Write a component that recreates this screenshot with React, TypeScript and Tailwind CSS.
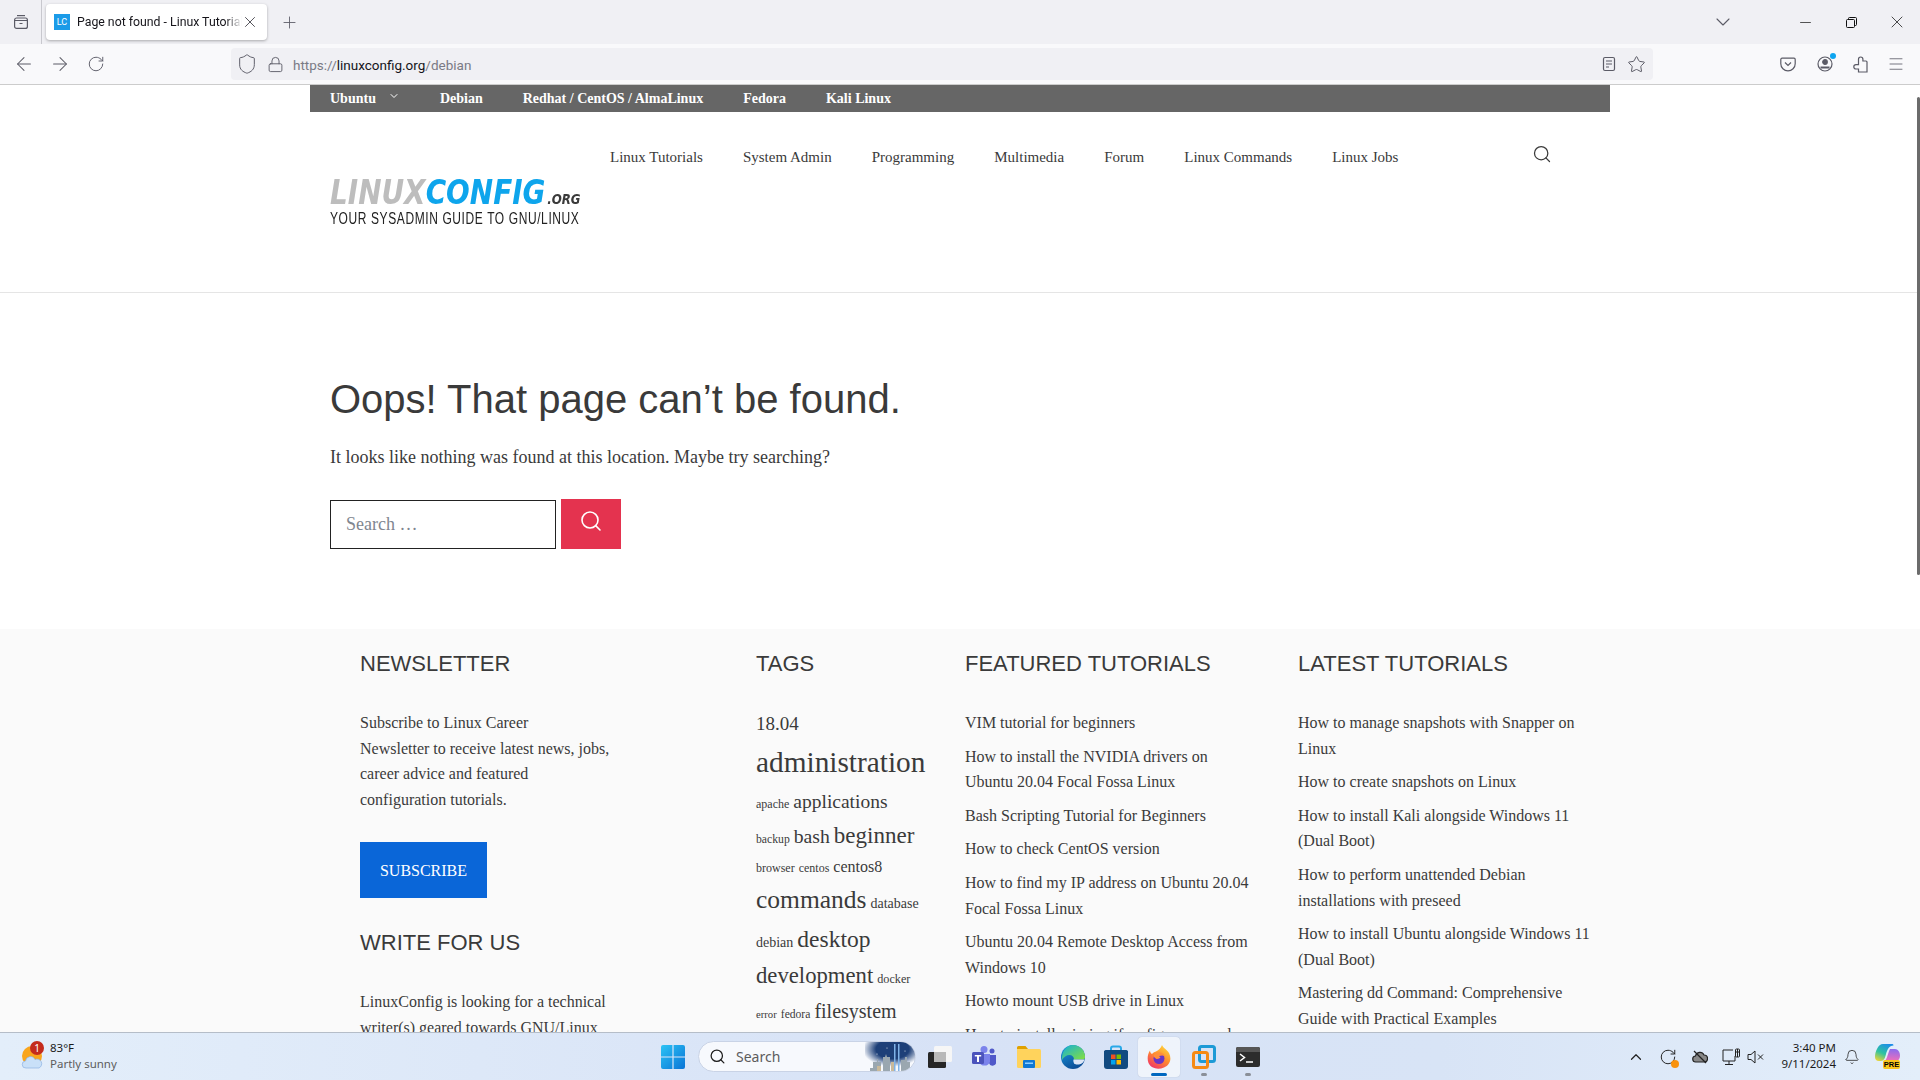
import React from "react";
import { ArrowLeft, ArrowRight, RotateCw, Shield, Lock, Star, Plus, X, ChevronDown, Minus, Menu, Search, ChevronUp, Bell } from "lucide-react";

const serif = "font-['Liberation_Serif',serif]";

function FirefoxView() {
  return (
    <svg width="16" height="16" viewBox="0 0 16 16" fill="none" stroke="#5b5b66" strokeWidth="1.2">
      <path d="M4 1.6h8" />
      <rect x="1.6" y="4" width="12.8" height="10.4" rx="2" />
      <path d="M1.6 6.5h12.8M6.5 9.5h3" />
    </svg>
  );
}

function Chrome() {
  return (
    <div className="shrink-0 font-['Roboto',sans-serif]">
      <div className="h-[44px] bg-[#f0f0f4] flex items-center relative">
        <div className="w-[42px] h-[44px] border-r border-[#c8c8ce] flex items-center justify-center">
          <FirefoxView />
        </div>
        <div className="ml-[4px] w-[221px] h-[36px] bg-white rounded-[4px] shadow-[0_1px_3px_rgba(0,0,0,0.3)] flex items-center pl-[8px]">
          <span className="w-[16px] h-[16px] bg-[#1b9be8] text-white text-[9px] flex items-center justify-center leading-none shrink-0">LC</span>
          <span className="ml-[7px] w-[165px] text-[12.3px] text-[#15141a] whitespace-nowrap overflow-hidden [mask-image:linear-gradient(to_right,black_90%,transparent)]">Page not found - Linux Tutorials</span>
          <X size={18} strokeWidth={1.1} color="#33323a" className="-ml-[1px]" />
        </div>
        <Plus size={19} strokeWidth={1.1} color="#5b5b66" className="ml-[13px]" />
        <div className="ml-auto flex items-center">
          <ChevronDown size={24} strokeWidth={1.1} color="#5b5b66" className="mr-[62px]" />
          <Minus size={17} strokeWidth={1} color="#111" className="mr-[32px]" />
          <svg width="11" height="11" viewBox="0 0 11 11" fill="none" stroke="#111" strokeWidth="1" className="mr-[30px]"><rect x="0.5" y="2.5" width="8" height="8" rx="1" /><path d="M2.5 2.5V1.5a1 1 0 011-1h6a1 1 0 011 1v6a1 1 0 01-1 1h-1" /></svg>
          <X size={20} strokeWidth={0.9} color="#111" className="mr-[13px]" />
        </div>
      </div>
      <div className="h-[41px] bg-[#f9f9fb] border-b border-[#cccccc] flex items-center">
        <ArrowLeft size={22} strokeWidth={1.1} color="#5b5b66" className="ml-[13px]" />
        <ArrowRight size={22} strokeWidth={1.1} color="#5b5b66" className="ml-[14px]" />
        <RotateCw size={18} strokeWidth={1.25} color="#5b5b66" className="ml-[16px]" />
        <div className="ml-[126px] w-[1422px] h-[32px] rounded-[4px] bg-[#f0f0f4] flex items-center pl-[5px]">
          <Shield size={22} strokeWidth={1.05} color="#5b5b66" />
          <Lock size={17} strokeWidth={1.3} color="#5b5b66" className="ml-[9px]" />
          <span className="ml-[9px] mt-[2px] text-[13.5px] text-[#7a7a85]">https://<span className="text-[#15141a]">linuxconfig.org</span>/debian</span>
          <div className="ml-auto flex items-center">
            <svg width="14" height="16" viewBox="0 0 14 16" fill="none" stroke="#5b5b66" strokeWidth="1.2"><rect x="1.5" y="1.5" width="11" height="13" rx="1.5" /><path d="M4 5h6M4 8h6M4 11h3" /></svg>
            <Star size={19} strokeWidth={1.25} color="#5b5b66" className="ml-[11px] mr-[7px]" />
          </div>
        </div>
        <div className="ml-auto flex items-center">
          <svg width="16" height="15" viewBox="0 0 16 15" fill="none" stroke="#5b5b66" strokeWidth="1.2" className="mr-[21px]"><path d="M2 1.2h12a1.2 1.2 0 011.2 1.2v4.3a7.2 7.2 0 01-14.4 0V2.4A1.2 1.2 0 012 1.2z" /><path d="M5 5.5l3 3 3-3" /></svg>
          <div className="relative mr-[20px]">
            <svg width="16" height="16" viewBox="0 0 16 16" fill="none" stroke="#5b5b66" strokeWidth="1.2"><circle cx="8" cy="8" r="7" /><circle cx="8" cy="6" r="2.3" fill="#5b5b66" /><path d="M3.5 11.5h9" strokeWidth="2" /></svg>
            <span className="absolute -top-[3px] -right-[3px] w-[6px] h-[6px] rounded-full bg-[#0ea5f0]" />
          </div>
          <svg width="15" height="17" viewBox="0 0 15 17" fill="none" stroke="#5b5b66" strokeWidth="1.2" className="mr-[19px]"><path d="M5.5 5V3.200a2.200 2.200 0 014.400 0V5H13a1 1 0 011 1v10H5.500v-3H3a2.200 2.200 0 010-4.400h2.500z" /></svg>
          <Menu size={18} strokeWidth={1.1} color="#5b5b66" className="mr-[15px]" />
        </div>
      </div>
    </div>
  );
}

function Logo() {
  return (
    <div className="w-[250px] select-none">
      <div className="w-[300px] h-[27px] flex items-baseline font-['DejaVu_Sans',sans-serif] font-bold italic text-[33px] leading-[27px] whitespace-nowrap origin-left scale-x-[0.845]">
        <span className="text-[#bdbdbd]">LINUX</span>
        <span className="text-[#0ea5ec]">CONFIG</span>
        <span className="text-[#3a3a3a] text-[14px] ml-[2px]">.ORG</span>
      </div>
      <div className="mt-[7px] text-[12px] leading-[12px] whitespace-nowrap text-[#222] font-['Liberation_Sans',sans-serif] scale-y-[1.3] tracking-[0.6px]">YOUR SYSADMIN GUIDE TO GNU/LINUX</div>
    </div>
  );
}

function TopBars() {
  return (
    <>
      <div className={`w-[1300px] mx-auto h-[27px] bg-[#666666] flex items-center pl-[20px] gap-[40px] text-white font-bold text-[14px] ${serif}`}>
        <span className="flex items-center">Ubuntu<ChevronDown size={12} strokeWidth={2} className="ml-[12px] -mt-[5px]" /></span>
        <span>Debian</span>
        <span>Redhat / CentOS / AlmaLinux</span>
        <span>Fedora</span>
        <span>Kali Linux</span>
      </div>
      <div className="border-b border-[#e5e5e5] h-[181px]">
        <div className="w-[1300px] mx-auto flex pl-[20px] relative">
          <div className="pt-[67px] w-[280px]"><Logo /></div>
          <div className={`pt-[35px] flex gap-[40px] text-[15px] leading-[20px] text-[#3a3a3a] ${serif}`}>
            <span>Linux Tutorials</span>
            <span>System Admin</span>
            <span>Programming</span>
            <span>Multimedia</span>
            <span>Forum</span>
            <span>Linux Commands</span>
            <span>Linux Jobs</span>
          </div>
          <Search size={20} strokeWidth={1.5} color="#3a3a3a" className="absolute left-[1222px] top-[32px]" />
        </div>
      </div>
    </>
  );
}

function NotFound() {
  return (
    <div className="h-[336px] w-[1300px] mx-auto px-[20px] pt-[82px]">
      <h1 className="font-['Liberation_Sans',sans-serif] text-[40px] leading-[48px] text-[#3a3a3a]">Oops! That page can’t be found.</h1>
      <p className={`mt-[21px] text-[18px] leading-[27px] text-[#3a3a3a] ${serif}`}>It looks like nothing was found at this location. Maybe try searching?</p>
      <div className="mt-[28px] flex items-start">
        <div className={`w-[226px] h-[49px] mt-[1px] border-[1.5px] border-[#222] flex items-center pl-[15px] text-[18px] text-[#808690] ${serif}`}>Search …</div>
        <div className="ml-[5px] w-[60px] h-[50px] bg-[#e4334f] flex items-center justify-center">
          <Search size={24} strokeWidth={1.6} color="white" className="-mt-[6px]" />
        </div>
      </div>
    </div>
  );
}

function Heading({ children }: { children: React.ReactNode }) {
  return <h2 className="font-['Liberation_Sans',sans-serif] text-[22px] leading-[28px] text-[#3a3a3a]">{children}</h2>;
}

function Links({ items }: { items: React.ReactNode[] }) {
  return (
    <ul className="mt-[32px] flex flex-col gap-[8px]">
      {items.map((t, i) => <li key={i}>{t}</li>)}
    </ul>
  );
}

function Tags() {
  return (
    <div className="mt-[31px] whitespace-nowrap leading-[1.6]">
      <span className="text-[19px]">18.04</span><br />
      <span className="text-[29.33px]">administration</span><br />
      <span className="text-[12px]">apache</span> <span className="text-[19.5px]">applications</span><br />
      <span className="text-[11.7px]">backup</span> <span className="text-[19.7px]">bash</span> <span className="text-[23px]">beginner</span><br />
      <span className="text-[12px]">browser</span> <span className="text-[12px]">centos</span> <span className="text-[16px]">centos8</span><br />
      <span className="text-[25.5px]">commands</span> <span className="text-[14px]">database</span><br />
      <span className="text-[14px]">debian</span> <span className="text-[23.5px]">desktop</span><br />
      <span className="text-[22.7px]">development</span> <span className="text-[12.2px]">docker</span><br />
      <span className="text-[10.7px]">error</span> <span className="text-[11.6px]">fedora</span> <span className="text-[20px]">filesystem</span>
    </div>
  );
}

function Footer() {
  return (
    <div className={`bg-[#fafafa] h-[500px] text-[16px] leading-[1.6] text-[#3a3a3a] ${serif}`}>
      <div className="w-[1300px] mx-auto pl-[50px] pt-[21px] grid grid-cols-[396px_209px_333px_292px]">
        <div>
          <Heading>NEWSLETTER</Heading>
          <p className="mt-[32px]">Subscribe to Linux Career<br />Newsletter to receive latest news, jobs,<br />career advice and featured<br />configuration tutorials.</p>
          <div className="mt-[30px] w-[127px] h-[56px] bg-[#0a66d8] text-white text-[16px] flex items-center justify-center">SUBSCRIBE</div>
          <div className="mt-[31px]"><Heading>WRITE FOR US</Heading></div>
          <p className="mt-[32px]">LinuxConfig is looking for a technical<br />writer(s) geared towards GNU/Linux<br />and FLOSS technologies.</p>
        </div>
        <div>
          <Heading>TAGS</Heading>
          <Tags />
        </div>
        <div>
          <Heading>FEATURED TUTORIALS</Heading>
          <Links items={[
            "VIM tutorial for beginners",
            <>How to install the NVIDIA drivers on<br />Ubuntu 20.04 Focal Fossa Linux</>,
            "Bash Scripting Tutorial for Beginners",
            "How to check CentOS version",
            <>How to find my IP address on Ubuntu 20.04<br />Focal Fossa Linux</>,
            <>Ubuntu 20.04 Remote Desktop Access from<br />Windows 10</>,
            "Howto mount USB drive in Linux",
            "How to install missing ifconfig command",
          ]} />
        </div>
        <div>
          <Heading>LATEST TUTORIALS</Heading>
          <Links items={[
            <>How to manage snapshots with Snapper on<br />Linux</>,
            "How to create snapshots on Linux",
            <>How to install Kali alongside Windows 11<br />(Dual Boot)</>,
            <>How to perform unattended Debian<br />installations with preseed</>,
            <>How to install Ubuntu alongside Windows 11<br />(Dual Boot)</>,
            <>Mastering dd Command: Comprehensive<br />Guide with Practical Examples</>,
          ]} />
        </div>
      </div>
    </div>
  );
}

function Slot({ w, children, active, running }: { w: number; children: React.ReactNode; active?: boolean; running?: boolean }) {
  return (
    <div style={{ width: w }} className={`relative h-[40px] flex items-center justify-center rounded-[4px] ${active ? "bg-white/60 shadow-[0_0_1px_rgba(0,0,0,0.25)]" : ""}`}>
      {children}
      {active && <span className="absolute bottom-[1px] left-1/2 -translate-x-1/2 w-[16px] h-[3px] rounded-full bg-[#0067c0]" />}
      {running && <span className="absolute bottom-[1px] left-1/2 -translate-x-1/2 w-[6px] h-[3px] rounded-full bg-[#8a8f98]" />}
    </div>
  );
}

function WinLogo() {
  return (
    <svg width="24" height="24" viewBox="0 0 24 24">
      <defs><linearGradient id="wl" x1="0" y1="0" x2="1" y2="1"><stop offset="0" stopColor="#2cc3f5" /><stop offset="1" stopColor="#0a74d6" /></linearGradient></defs>
      <path fill="url(#wl)" d="M0 2a2 2 0 012-2h9.4v11.4H0zM12.6 0H22a2 2 0 012 2v9.4H12.6zM0 12.6h11.4V24H2a2 2 0 01-2-2zM12.6 12.6H24V22a2 2 0 01-2 2h-9.4z" />
    </svg>
  );
}

function SearchPill() {
  return (
    <div className="w-[218px] h-[31px] rounded-full bg-[#f7f9fd] border border-[#c9d3e6] flex items-center pl-[10px] relative overflow-hidden">
      <Search size={17} strokeWidth={1.8} color="#1f1f1f" />
      <span className="ml-[10px] text-[14px] text-[#5c5c5c]">Search</span>
      <svg width="50" height="29" viewBox="0 0 50 29" className="absolute right-0 top-0">
        <defs><radialGradient id="sky" cx="0.55" cy="0.25" r="0.6"><stop offset="0.55" stopColor="#1d3f78" /><stop offset="1" stopColor="#1d3f78" stopOpacity="0" /></radialGradient></defs>
        <rect width="50" height="29" fill="url(#sky)" />
        <path fill="#9aa7b0" d="M5 29v-3h3v-6h4v-3h1v3h3v9zM18 29V15h2l1-3 1 3h3v14zM36 29V18h4v-3h2v5h3v9z" />
        <path fill="#c9b99a" d="M12 29v-5h4v5zM26 29V20h3v9z" />
        <path fill="#7fb2e8" d="M29 2h1.500v27H29zM33 2h1.500v27H33z" />
        <circle cx="12" cy="12" r="0.500" fill="white" /><circle cx="40" cy="9" r="0.500" fill="white" /><circle cx="22" cy="6" r="0.500" fill="white" />
      </svg>
    </div>
  );
}

function TaskView() {
  return (
    <svg width="24" height="22" viewBox="0 0 24 22">
      <rect x="6" y="0" width="18" height="16" rx="1.5" fill="#f6f6f6" />
      <rect x="0" y="6" width="18" height="16" rx="1.5" fill="#262626" />
      <rect x="6" y="6" width="12" height="10" fill="#b9b9b9" />
    </svg>
  );
}

function Teams() {
  return (
    <svg width="24" height="22" viewBox="0 0 24 22">
      <circle cx="12" cy="3.500" r="3.500" fill="#7b83eb" />
      <circle cx="20" cy="5" r="2.500" fill="#5059c9" />
      <path fill="#5059c9" d="M17 9h7v6a3.500 3.500 0 01-7 2z" />
      <path fill="#7b83eb" d="M7 8h11v8a6 6 0 01-11 0z" />
      <rect x="0" y="6" width="12" height="12" rx="1.5" fill="#4b53bc" />
      <path fill="white" d="M2.800 9h6.400v1.600H7V16H5v-5.400H2.800z" />
    </svg>
  );
}

function Explorer() {
  return (
    <svg width="24" height="22" viewBox="0 0 24 22">
      <path fill="#e0a100" d="M0 1.500A1.500 1.500 0 011.500 0h7l2.500 3H0z" />
      <path fill="#ffd35c" d="M0 3h22.500A1.500 1.500 0 0124 4.500V20.500a1.500 1.500 0 01-1.500 1.500h-21A1.500 1.500 0 010 20.500z" />
      <rect x="6" y="14" width="12" height="8" rx="1" fill="#0f78d4" />
      <rect x="8" y="16.500" width="8" height="1.500" fill="#8fd0ff" />
    </svg>
  );
}

function Edge() {
  return (
    <svg width="24" height="24" viewBox="0 0 24 24">
      <defs>
        <linearGradient id="e1" x1="0.2" y1="0" x2="1" y2="0.8"><stop offset="0" stopColor="#1fb4c8" /><stop offset="1" stopColor="#7cdc4a" /></linearGradient>
        <linearGradient id="e2" x1="0" y1="0" x2="0.5" y2="1"><stop offset="0" stopColor="#1b9de2" /><stop offset="1" stopColor="#0c4f98" /></linearGradient>
      </defs>
      <circle cx="12" cy="12" r="12" fill="url(#e2)" />
      <path fill="url(#e1)" d="M12 0a12 12 0 0112 12c0 1.500-.500 2.500-2 2.500H13c0-3-2-4.500-4.500-4.500-3 0-6 2-7.500 5C.5 7 5 0 12 0z" />
      <path fill="#dbe5f6" d="M12.500 14.500h11c-.500 2-2 3.500-4 4.500-2 .800-4 .800-5.500 0-1.500-1-2-2.700-1.500-4.500z" />
    </svg>
  );
}

function Store() {
  return (
    <svg width="24" height="24" viewBox="0 0 24 24">
      <path d="M7 6V3.500a2 2 0 012-2h6a2 2 0 012 2V6" fill="none" stroke="#29a8e8" strokeWidth="2" />
      <path d="M1.500 5h21l1.500 1v15a3 3 0 01-3 3H3a3 3 0 01-3-3V6z" fill="#114a80" />
      <rect x="7" y="9.500" width="4.500" height="4.500" fill="#f25022" />
      <rect x="12.500" y="9.500" width="4.500" height="4.500" fill="#7fba00" />
      <rect x="7" y="15" width="4.500" height="4.500" fill="#00a4ef" />
      <rect x="12.500" y="15" width="4.500" height="4.500" fill="#ffb900" />
    </svg>
  );
}

function Firefox() {
  return (
    <svg width="24" height="24" viewBox="0 0 24 24">
      <defs>
        <linearGradient id="f1" x1="0.8" y1="0" x2="0.2" y2="1"><stop offset="0" stopColor="#ffd93a" /><stop offset="0.5" stopColor="#ff8a2f" /><stop offset="1" stopColor="#f0306a" /></linearGradient>
      </defs>
      <path fill="url(#f1)" d="M15 0c1 3 5 4.500 7 8 3 6 1 12-5 14.500C11 25 4 23.500 1.500 18 0 14 .5 9 3 5.500c0 2 1 3 2 3.500 1-1 2-2 4-2.500C12 5 14 3 15 0z" />
      <circle cx="12" cy="13.500" r="5.500" fill="#6a35c4" />
      <path fill="#ff8f3a" d="M6.500 11C8 7.500 12 6.500 15 8c1.500.8 2.500 2 3 3.500-2-1.500-4-1-5.500-.5-.5.500 0 1 1 1.200-1 1.500-3 2-4.500 1.500C8 13 7 12 6.500 11z" />
    </svg>
  );
}

function VMware() {
  return (
    <svg width="24" height="24" viewBox="0 0 24 24" fill="none">
      <rect x="7.500" y="1.500" width="15" height="15" rx="2" stroke="#1c9ad6" strokeWidth="3" />
      <rect x="1.500" y="7.500" width="14" height="15" rx="2" stroke="#f58a14" strokeWidth="3" />
    </svg>
  );
}

function Terminal() {
  return (
    <svg width="24" height="20" viewBox="0 0 24 20">
      <rect width="24" height="20" rx="2" fill="#2c2c2c" />
      <path d="M2 0h20a2 2 0 012 2v3H0V2a2 2 0 012-2z" fill="#565656" />
      <path d="M4 7l4.500 3.500L4 14" fill="none" stroke="white" strokeWidth="1.500" />
      <path d="M10 15h7" stroke="white" strokeWidth="1.500" />
    </svg>
  );
}

function Copilot() {
  return (
    <div className="relative w-[25px] h-[25px]">
      <svg width="25" height="19" viewBox="0 0 25 19">
        <defs>
          <linearGradient id="c1" x1="0.7" y1="0" x2="0.2" y2="1"><stop offset="0" stopColor="#1c8ee8" /><stop offset="0.55" stopColor="#2fc3a0" /><stop offset="1" stopColor="#e8d43a" /></linearGradient>
          <linearGradient id="c2" x1="0.6" y1="0" x2="0.5" y2="1"><stop offset="0" stopColor="#8a6cf0" /><stop offset="1" stopColor="#f06fb8" /></linearGradient>
        </defs>
        <path fill="url(#c1)" d="M8 0h9c1 0 1.500.5 1.500 1.500C14 2 12.500 5 11 10c-1 4-2 7-5 7H4c-3 0-4-2-4-4C0 8 3 0 8 0z" />
        <path fill="url(#c2)" d="M15 5h5c3 0 5 3 5 6.500 0 3-1.500 5.500-4.500 5.500H10c2-2 3-8 5-12z" />
      </svg>
      <span className="absolute left-[8px] bottom-0 w-[17px] h-[9px] rounded-[2px] bg-[#f8c51c] text-[7.5px] leading-[9px] font-bold text-black text-center font-['Liberation_Sans',sans-serif]">PRE</span>
    </div>
  );
}

function Taskbar() {
  return (
    <div className="shrink-0 h-[48px] border-t border-[#b5bdc8] bg-[linear-gradient(90deg,#e3eefa_0%,#d7e2f6_50%,#d8e4f6_75%,#e3eefa_100%)] flex items-center font-['Noto_Sans',sans-serif] relative">
      <div className="ml-[21px] w-[22px] h-[24px] relative">
        <svg width="22" height="24" viewBox="0 0 22 24">
          <circle cx="11" cy="11" r="10" fill="#f9a51d" />
          <path fill="#c9e0f8" stroke="#8cb2e2" strokeWidth="0.7" d="M5 23a3.500 3.500 0 01-.5-7 5 5 0 019.500-1.500A4.200 4.200 0 0118 23z" />
        </svg>
        <span className="absolute -top-[4px] left-[9px] w-[14px] h-[14px] rounded-full bg-[#c42b1c] text-white text-[10px] leading-[14px] text-center">1</span>
      </div>
      <div className="ml-[7px] w-[90px] text-[11.5px] leading-[16px] -mt-[1px]">
        <div className="text-[#1b1b1b]">83°F</div>
        <div className="text-[#5d5d5d]">Partly sunny</div>
      </div>
      <div className="ml-[511px] flex items-center">
        <Slot w={44}><WinLogo /></Slot>
        <div className="ml-[3px]"><SearchPill /></div>
        <div className="ml-[2px] flex items-center">
          <Slot w={44}><TaskView /></Slot>
          <Slot w={44}><Teams /></Slot>
          <Slot w={46}><Explorer /></Slot>
          <Slot w={42}><Edge /></Slot>
          <Slot w={44}><Store /></Slot>
          <Slot w={42} active><Firefox /></Slot>
          <Slot w={48} running><VMware /></Slot>
          <Slot w={40} running><Terminal /></Slot>
        </div>
      </div>
      <div className="ml-auto flex items-center">
        <ChevronUp size={18} strokeWidth={1.6} color="#222" />
        <div className="relative ml-[14px]">
          <RotateCw size={18} strokeWidth={1.3} color="#222" />
          <span className="absolute -right-[2px] -bottom-[2px] w-[8px] h-[8px] rounded-full bg-[#f9920d]" />
        </div>
        <svg width="16" height="16" viewBox="0 0 16 16" fill="none" stroke="#222" strokeWidth="1.200" className="ml-[15px]"><path d="M4 13a3 3 0 01-.5-6 4.500 4.500 0 018.500-1 3.500 3.500 0 010 7z" fill="#888" /><path d="M2 2l12 12" /></svg>
        <svg width="20" height="18" viewBox="0 0 20 18" fill="none" stroke="#222" strokeWidth="1" className="ml-[14px]"><path d="M11 2H1v11h12V8M7 13v3M3 16.500h8" /><rect x="13.500" y="1" width="4" height="8" rx="1" /><path d="M15.500 1v8M13.500 4h4" /></svg>
        <svg width="17" height="14" viewBox="0 0 17 14" fill="none" stroke="#222" strokeWidth="1" className="ml-[5px]"><path d="M1 4.500h3L8 1v12L4 9.500H1zM11 4.500l5 5M16 4.500l-5 5" /></svg>
        <div className="ml-[7px] w-[65px] text-right text-[11.5px] leading-[16px] text-[#1b1b1b] -mt-[1px]">
          <div>3:40 PM</div>
          <div>9/11/2024</div>
        </div>
        <Bell size={16} strokeWidth={1.2} color="#222" className="ml-[8px]" />
        <div className="ml-[15px] mr-[20px]"><Copilot /></div>
      </div>
    </div>
  );
}

export default function App() {
  return (
    <div className="h-screen w-full overflow-hidden flex flex-col bg-white">
      <Chrome />
      <div className="flex-1 overflow-hidden relative">
        <TopBars />
        <NotFound />
        <Footer />
        <div className="absolute right-0 top-[12px] w-[3px] h-[478px] bg-[#6b6b6b] rounded-full" />
      </div>
      <Taskbar />
    </div>
  );
}
